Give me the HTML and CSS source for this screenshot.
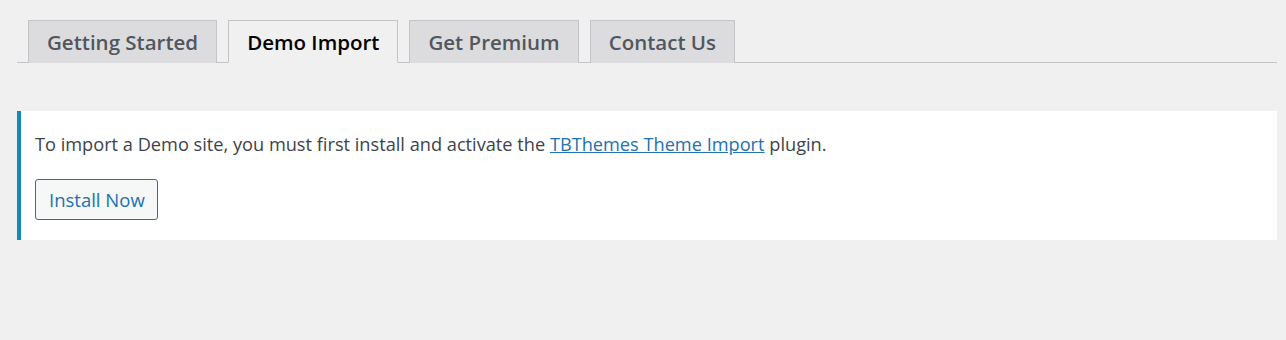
FILE: index.html
```html
<!DOCTYPE html>
<html>
<head>
<meta charset="utf-8">
<link rel="stylesheet" href="styles.css">
</head>
<body>
<div class="wrap">
  <nav class="tabs">
    <a class="tab">Getting Started</a>
    <a class="tab active">Demo Import</a>
    <a class="tab">Get Premium</a>
    <a class="tab">Contact Us</a>
  </nav>
  <div class="notice">
    <p class="msg">To import a Demo site, you must first install and activate the <a class="link" href="#">TBThemes Theme Import</a> plugin.</p>
    <a class="button" href="#">Install Now</a>
  </div>
</div>
</body>
</html>
```
FILE: styles.css
```css
html, body {
  margin: 0;
  background: #f0f0f0;
}
body {
  font-family: "Open Sans", "Noto Sans", sans-serif;
  color: #3c434a;
}
.wrap {
  padding: 20px 9px 0 17px;
}
.tabs {
  display: flex;
  gap: 11px;
  padding-left: 11px;
  border-bottom: 1px solid #c3c4c7;
  height: 42px;
}
.tab {
  box-sizing: border-box;
  height: 43px;
  padding: 0 18px;
  display: flex;
  align-items: center;
  font-size: 20.5px;
  font-weight: 600;
  color: #50575e;
  background: #dcdcde;
  border: 1px solid #c3c4c7;
  border-bottom: none;
  text-decoration: none;
}
.tab.active {
  background: #f0f0f0;
  color: #000;
  border-bottom: 1px solid #f0f0f0;
}
.notice {
  margin-top: 48px;
  background: #fff;
  border-left: 4px solid #0e8db5;
  box-shadow: 0 1px 1px rgba(0,0,0,0.06);
  padding: 21px 14px 20px 14px;
}
.msg {
  margin: 0 0 23px;
  font-size: 18.2px;
  line-height: 24px;
  color: #3c434a;
}
.link {
  color: #2271b1;
  text-decoration: underline;
}
.button {
  display: inline-flex;
  align-items: center;
  box-sizing: border-box;
  height: 41px;
  padding: 0 12px 0 13px;
  font-size: 18.5px;
  color: #2271b1;
  background: #f6f7f7;
  border: 1px solid #2271b1;
  border-radius: 3px;
  text-decoration: none;
}
```
